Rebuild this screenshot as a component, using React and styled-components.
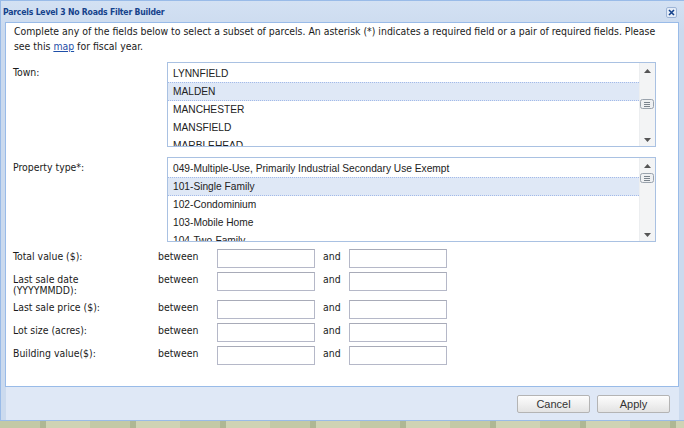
import React from "react";
import styled, { createGlobalStyle } from "styled-components";

const towns = ["LYNNFIELD", "MALDEN", "MANCHESTER", "MANSFIELD", "MARBLEHEAD"];
const propertyTypes = [
  "049-Multiple-Use, Primarily Industrial Secondary Use Exempt",
  "101-Single Family",
  "102-Condominium",
  "103-Mobile Home",
  "104-Two-Family",
];

const ranges = [
  { label: "Total value ($):" },
  { label: "Last sale date", sub: "(YYYYMMDD):" },
  { label: "Last sale price ($):" },
  { label: "Lot size (acres):" },
  { label: "Building value($):" },
];

const ScrollBar = ({ gripTop }) => (
  <Scroll>
    <Arrow viewBox="0 0 7 4">
      <path d="M0 4 L3.5 0 L7 4 Z" fill="#555" />
    </Arrow>
    <Track>
      <Grip style={{ top: gripTop }}>
        <svg width="14" height="10" viewBox="0 0 14 10">
          <rect x="0.5" y="0.5" width="13" height="9" rx="2" fill="#eef0f2" stroke="#9aa3ad" />
          <path d="M4 3.5h6M4 5.5h6M4 7.5h6" stroke="#7a838c" strokeWidth="1" />
        </svg>
      </Grip>
    </Track>
    <Arrow viewBox="0 0 7 4">
      <path d="M0 0 L3.5 4 L7 0 Z" fill="#555" />
    </Arrow>
  </Scroll>
);

const ListBox = ({ items, selected, gripTop }) => (
  <Box>
    <Items>
      {items.map((item, i) => (
        <Item key={item} selected={i === selected}>
          {item}
        </Item>
      ))}
    </Items>
    <ScrollBar gripTop={gripTop} />
  </Box>
);

export default function App() {
  return (
    <>
      <GlobalStyle />
      <Page>
        <Window>
          <Header>
            <Title>Parcels Level 3 No Roads Filter Builder</Title>
            <Close>
              <svg width="11" height="11" viewBox="0 0 11 11">
                <rect x="0.5" y="0.5" width="10" height="10" rx="1.5" fill="#e4ecf7" stroke="#9db4d6" />
                <path d="M3 3 L8 8 M8 3 L3 8" stroke="#15428b" strokeWidth="1.6" />
              </svg>
            </Close>
          </Header>
          <Body>
            <Intro>
              Complete any of the fields below to select a subset of parcels. An asterisk (*)
              indicates a required field or a pair of required fields. Please
              <br />
              see this <a href="#">map</a> for fiscal year.
            </Intro>
            <ListRow>
              <ListLabel>Town:</ListLabel>
              <ListBox items={towns} selected={1} gripTop={26} />
            </ListRow>
            <ListRow>
              <ListLabel>Property type*:</ListLabel>
              <ListBox items={propertyTypes} selected={1} gripTop={5} />
            </ListRow>
            <Ranges>
              {ranges.map((r) => (
                <React.Fragment key={r.label}>
                  <Label>
                    {r.label}
                    {r.sub && (
                      <>
                        <br />
                        {r.sub}
                      </>
                    )}
                  </Label>
                  <Word>between</Word>
                  <Input />
                  <Word>and</Word>
                  <Input />
                </React.Fragment>
              ))}
            </Ranges>
          </Body>
          <Footer>
            <Button>Cancel</Button>
            <Button>Apply</Button>
          </Footer>
        </Window>
        <MapStrip />
      </Page>
    </>
  );
}

const GlobalStyle = createGlobalStyle`
  html, body {
    margin: 0;
    padding: 0;
    background: #b7bfa2;
  }
  * { box-sizing: border-box; }
`;

const Page = styled.div`
  width: 684px;
  height: 428px;
  overflow: hidden;
  display: flex;
  flex-direction: column;
`;

const Window = styled.div`
  height: 421px;
  background: linear-gradient(#d3e1f3, #cbdaee 30px, #cbdaee);
  border: 1px solid #99bbe8;
  border-right: none;
  padding: 0 5px 0 4px;
  display: flex;
  flex-direction: column;
`;

const Header = styled.div`
  height: 21px;
  display: flex;
  align-items: center;
  justify-content: space-between;
  margin: 0 0 0 -2px;
  padding: 0 2px 0 0;
`;

const Title = styled.div`
  font-family: "DejaVu Sans Condensed", "DejaVu Sans", sans-serif;
  font-weight: bold;
  font-size: 8.6px;
  letter-spacing: -0.2px;
  color: #15428b;
`;

const Close = styled.div`
  display: flex;
  margin-top: 1px;
`;

const Body = styled.div`
  height: 365px;
  background: #fff;
  border: 1px solid #99bbe8;
  padding: 1px 0 0 7px;
  font-family: "DejaVu Sans Condensed", "DejaVu Sans", sans-serif;
  font-size: 10.4px;
  color: #1a1a1a;
`;

const Intro = styled.div`
  line-height: 15px;
  padding-left: 1px;
  margin-bottom: 8px;
  white-space: nowrap;

  a {
    color: #1f4fa8;
    text-decoration: underline;
  }
`;

const ListRow = styled.div`
  display: grid;
  grid-template-columns: 154px 489px;
  margin-bottom: 10px;
`;

const Label = styled.div`
  line-height: 11px;
  padding-top: 2px;
`;

const ListLabel = styled(Label)`
  padding-top: 5px;
`;

const Box = styled.div`
  height: 85px;
  border: 1px solid #a9c1e2;
  display: flex;
  overflow: hidden;
`;

const Items = styled.div`
  flex: 1;
  overflow: hidden;
  padding-top: 1px;
`;

const Item = styled.div`
  height: 19px;
  line-height: 17px;
  padding-left: 5px;
  font-family: "Liberation Sans", Arial, sans-serif;
  font-size: 10.2px;
  color: #222;
  white-space: nowrap;
  background: ${({ selected }) => (selected ? "#dfe8f6" : "#fff")};
  border-top: 1px ${({ selected }) => (selected ? "dotted #a3bae9" : "solid transparent")};
  border-bottom: 1px ${({ selected }) => (selected ? "dotted #a3bae9" : "solid #ededed")};
  margin-top: -1px;
  position: relative;
  z-index: ${({ selected }) => (selected ? 1 : 0)};

  &:first-child {
    margin-top: 0;
  }
`;

const Scroll = styled.div`
  width: 16px;
  background: #f3f4f5;
  border-left: 1px solid #eceef0;
  display: flex;
  flex-direction: column;
  align-items: center;
  padding: 6px 0 4px;
`;

const Arrow = styled.svg`
  width: 7px;
  height: 4px;
  flex: none;
`;

const Track = styled.div`
  flex: 1;
  width: 100%;
  position: relative;
`;

const Grip = styled.div`
  position: absolute;
  left: 0;
  display: flex;
`;

const Ranges = styled.div`
  display: grid;
  grid-template-columns: 145px 59px 98px 8px 26px 98px;
  row-gap: 4px;
  margin-top: -3px;

  & > div:nth-child(5n + 4) {
    grid-column: 5;
  }
`;

const Word = styled.div`
  line-height: 11px;
  padding-top: 2px;
`;

const Input = styled.input`
  width: 98px;
  height: 19px;
  border: 1px solid #b5b8c8;
  border-top-color: #a8abb8;
  background: #fff;
  padding: 0 3px;
  font: inherit;
  outline: none;
`;

const Footer = styled.div`
  flex: 1;
  display: flex;
  justify-content: flex-end;
  align-items: flex-start;
  gap: 7px;
  padding: 8px 9px 0 0;
  background: #dfe8f6;
  margin: 0 0 0 1px;
`;

const Button = styled.button`
  width: 73px;
  height: 18px;
  border: 1px solid #b4b4b4;
  border-radius: 2px;
  background: linear-gradient(#fdfdfd, #f0f0f0 50%, #e3e3e3);
  font-family: "Liberation Sans", Arial, sans-serif;
  font-size: 11px;
  color: #333;
  padding: 0;
`;

const MapStrip = styled.div`
  flex: 1;
  background: repeating-linear-gradient(90deg, #c3c9a6 0 40px, #aeb794 40px 46px, #cfd3b4 46px 90px);
`;
